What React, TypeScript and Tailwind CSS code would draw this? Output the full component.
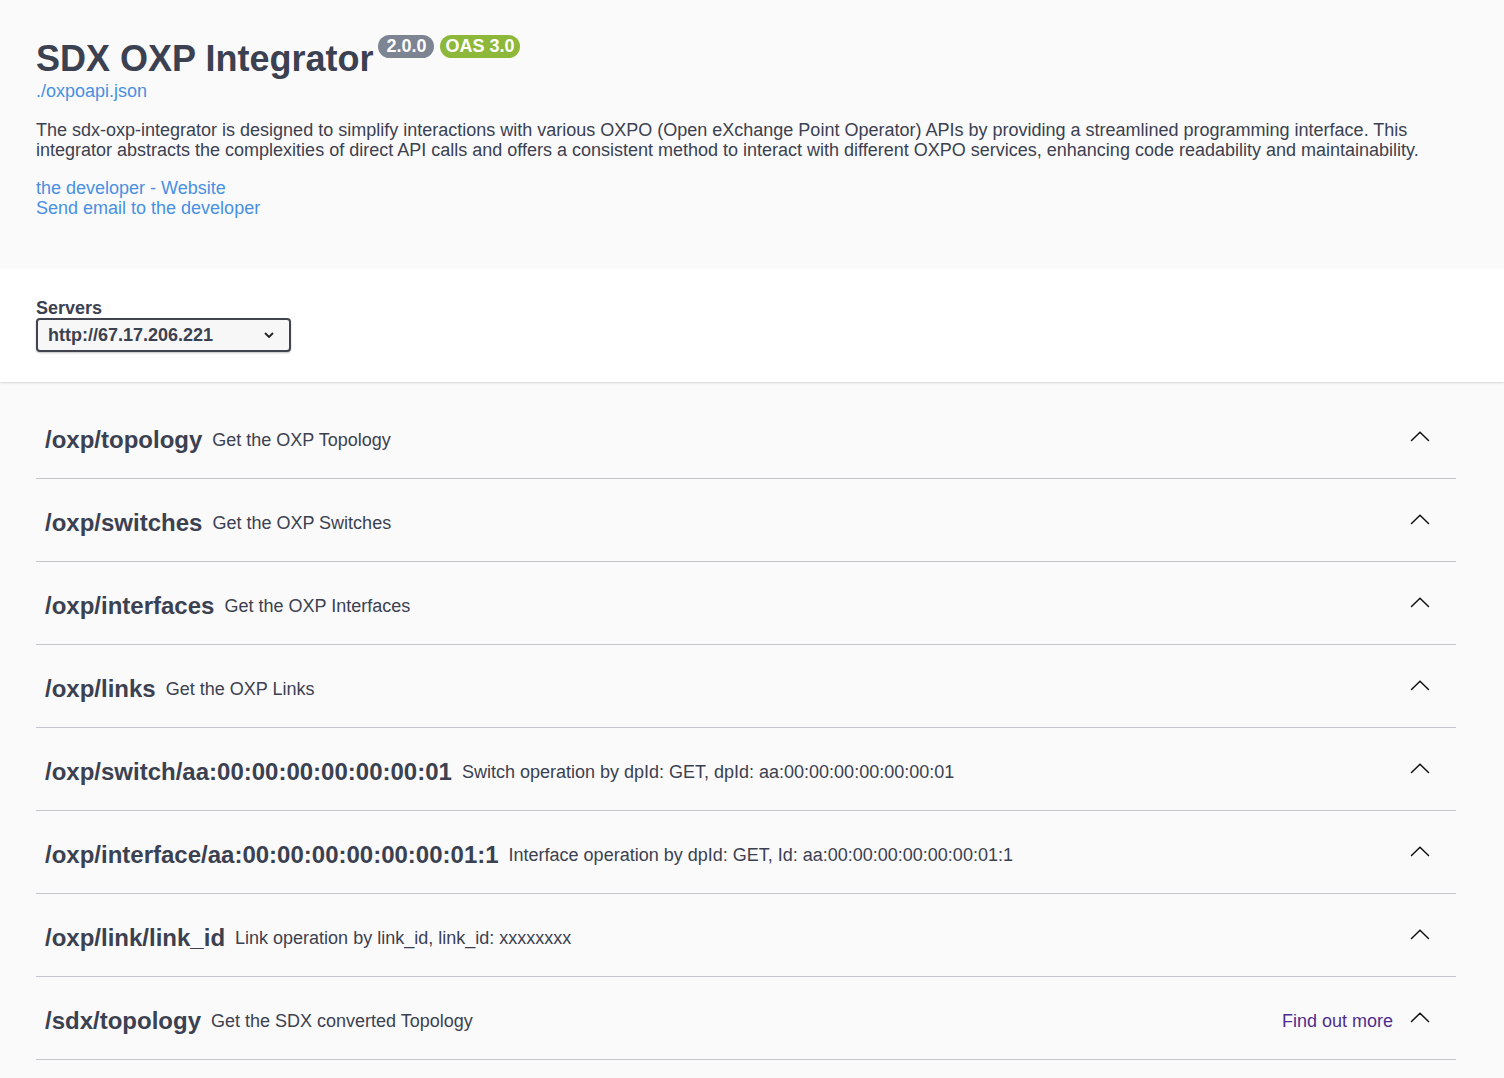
import React from "react";

const FONT = { fontFamily: '"Liberation Sans", Arial, Helvetica, sans-serif' };

type Tag = { path: string; desc: string; more?: boolean };

const tags: Tag[] = [
  { path: "/oxp/topology", desc: "Get the OXP Topology" },
  { path: "/oxp/switches", desc: "Get the OXP Switches" },
  { path: "/oxp/interfaces", desc: "Get the OXP Interfaces" },
  { path: "/oxp/links", desc: "Get the OXP Links" },
  {
    path: "/oxp/switch/aa:00:00:00:00:00:00:01",
    desc: "Switch operation by dpId: GET, dpId: aa:00:00:00:00:00:00:01",
  },
  {
    path: "/oxp/interface/aa:00:00:00:00:00:00:01:1",
    desc: "Interface operation by dpId: GET, Id: aa:00:00:00:00:00:00:01:1",
  },
  { path: "/oxp/link/link_id", desc: "Link operation by link_id, link_id: xxxxxxxx" },
  { path: "/sdx/topology", desc: "Get the SDX converted Topology", more: true },
];

// swagger style arrow, pointing up (section expanded)
function ArrowUp() {
  return (
    <svg width="20" height="20" viewBox="0 0 20 20" className="shrink-0">
      <polyline
        points="1.5,10.5 10,2.2 18.5,10.5"
        fill="none"
        stroke="#111"
        strokeWidth="1.5"
        strokeLinecap="round"
        strokeLinejoin="miter"
      />
    </svg>
  );
}

function TagRow({ tag }: { tag: Tag }) {
  return (
    <div className="mb-[5px]">
      <div className="flex h-[78px] items-center border-b border-[#c3c5ca] pl-[9px] pr-[26px]">
        <div className="flex flex-1 items-center">
          <span className="text-[24px] font-bold leading-[30px] text-[#3b4151]">{tag.path}</span>
          <span className="pl-[10px] text-[18px] leading-[22px] text-[#3b4151]">{tag.desc}</span>
        </div>
        {tag.more && (
          <a className="mr-[17px] text-[18px] leading-[22px] text-[#4f2d8c]">Find out more</a>
        )}
        <ArrowUp />
      </div>
    </div>
  );
}

export default function App() {
  return (
    <div className="min-h-screen bg-[#fafafa] text-[#3b4151]" style={FONT}>
      {/* info block */}
      <div className="px-[36px] pt-[38px] pb-[50px]">
        <div className="flex items-start">
          <h1 className="text-[36px] font-bold leading-[42px] text-[#3b4151]">SDX OXP Integrator</h1>
          <div className="ml-[5px] -mt-[3px] flex gap-[6px]">
            <span className="rounded-full bg-[#7d8492] px-[8px] text-[18px] font-bold leading-[23px] text-white">
              2.0.0
            </span>
            <span className="rounded-full bg-[#8db83a] px-[5px] text-[18px] font-bold leading-[23px] text-white">
              OAS 3.0
            </span>
          </div>
        </div>
        <a className="block text-[18px] leading-[22px] text-[#4990e2]">./oxpoapi.json</a>
        <p className="mt-[18px] text-[18px] leading-[20px] text-[#3b4151]">
          The sdx-oxp-integrator is designed to simplify interactions with various OXPO (Open eXchange Point
          Operator) APIs by providing a streamlined programming interface. This
          <br />
          integrator abstracts the complexities of direct API calls and offers a consistent method to interact
          with different OXPO services, enhancing code readability and maintainability.
        </p>
        <div className="mt-[18px] flex flex-col text-[18px] leading-[20px] text-[#4990e2]">
          <a>the developer - Website</a>
          <a>Send email to the developer</a>
        </div>
      </div>

      {/* servers */}
      <div className="bg-white px-[36px] py-[30px] shadow-[0_1px_2px_0_rgba(0,0,0,0.15)]">
        <div className="text-[18px] font-bold leading-[20px] text-[#3b4151]">Servers</div>
        <div className="flex h-[34px] w-[255px] items-center justify-between rounded-[4px] border-2 border-[#41444e] bg-[#f7f7f7] pl-[10px] pr-[15px] shadow-[0_1px_2px_0_rgba(0,0,0,0.25)]">
          <span className="text-[18px] font-bold text-[#3b4151]">http://67.17.206.221</span>
          <svg width="10" height="6" viewBox="0 0 10 6">
            <polyline points="1,1 5,5 9,1" fill="none" stroke="#222" strokeWidth="1.8" />
          </svg>
        </div>
      </div>

      {/* tags */}
      <div className="px-[36px] pr-[48px] pt-[19px]">
        {tags.map((t) => (
          <TagRow key={t.path} tag={t} />
        ))}
      </div>
    </div>
  );
}
